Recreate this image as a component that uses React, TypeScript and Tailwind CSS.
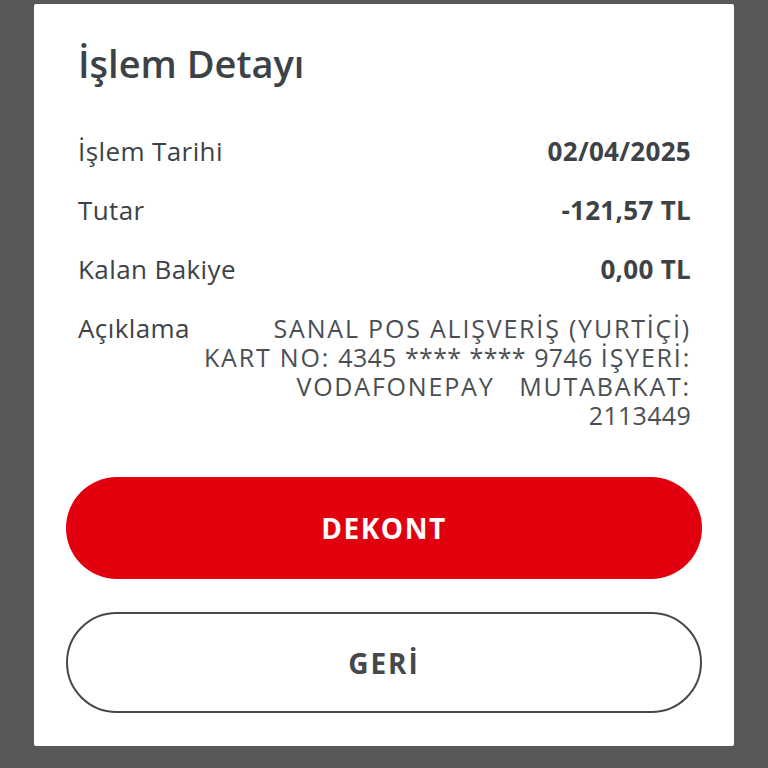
export default function App() {
    const rows = [
        { label: 'İşlem Tarihi', value: '02/04/2025' },
        { label: 'Tutar', value: '-121,57 TL' },
        { label: 'Kalan Bakiye', value: '0,00 TL' },
    ];

    // digits and stars sit tighter than letters in the original font
    const Num = ({ children }: { children: string }) => (
        <span className="tracking-[0.3px]">{children}</span>
    );

    return (
        <main className="w-full h-[768px] bg-[#585858] flex justify-center pt-[4px] font-['Open_Sans','Noto_Sans',sans-serif] text-[#3d4247]">
            <div className="w-[700px] h-[742px] bg-white rounded-[2px] flex flex-col pt-[36px] pb-[33px] px-[32px]">
                <h2 className="px-[12px] text-[38px] leading-[46px] font-semibold">İşlem Detayı</h2>

                <div className="flex flex-col gap-[30px] pl-[12px] pr-[11px] mt-[51px]">
                    {rows.map((r) => (
                        <div key={r.label} className="flex justify-between items-center text-[26px] leading-[29px]">
                            <span className="tracking-[0.4px]">{r.label}</span>
                            <span className="font-bold tracking-[0.3px]">{r.value}</span>
                        </div>
                    ))}
                    <div className="flex justify-between text-[26px] leading-[29px]">
                        <span className="tracking-[0.4px] shrink-0">Açıklama</span>
                        <div className="flex flex-col items-end text-right text-[#4a4f54] text-[25px] leading-[29px] tracking-[1.8px] whitespace-pre">
                            <span>SANAL POS ALIŞVERİŞ (YURTİÇİ)</span>
                            <span>
                                KART NO: <Num>4345</Num> <Num>****</Num> <Num>****</Num> <Num>9746</Num> İŞYERİ:
                            </span>
                            <span>VODAFONEPAY   MUTABAKAT:</span>
                            <span><Num>2113449</Num></span>
                        </div>
                    </div>
                </div>

                <button className="mt-[47px] h-[102px] rounded-full bg-[#e2000f] text-white text-[28px] font-bold tracking-[1.5px]">
                    DEKONT
                </button>
                <button className="mt-[33px] h-[101px] rounded-full border-2 border-[#45494d] bg-white text-[#45494d] text-[28px] font-bold tracking-[2px]">
                    GERİ
                </button>
            </div>
        </main>
    );
}
